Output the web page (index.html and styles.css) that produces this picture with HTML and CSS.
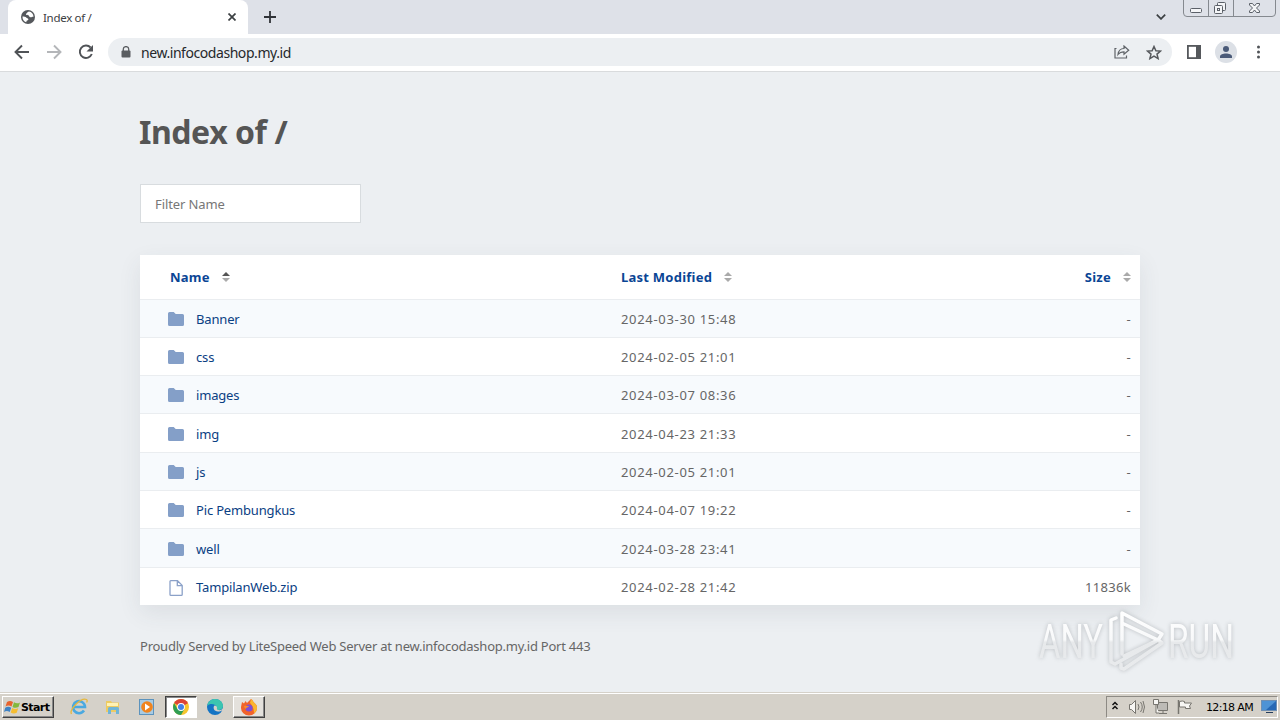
FILE: index.html
```html
<!DOCTYPE html>
<html lang="en">
<head>
  <meta charset="UTF-8">
  <title>Index of /</title>
  <link rel="stylesheet" href="styles.css">
</head>
<body>
  <svg class="defs">
    <symbol id="folder" viewBox="0 0 16 14">
      <path d="M1.5 0h4.2l2 2h6.8Q16 2 16 3.5v9q0 1.5-1.500 1.500h-13Q0 14 0 12.500v-11Q0 0 1.500 0z" fill="#849fc8"/>
    </symbol>
    <symbol id="sort" viewBox="0 0 8 10">
      <path d="M0 4l4-4 4 4z"/>
      <path d="M0 6h8l-4 4z" fill="#aaa"/>
    </symbol>
  </svg>

  <div class="tabstrip">
    <div class="tab">
      <svg class="globe" width="14" height="14" viewBox="0 0 14 14">
        <circle cx="7" cy="7" r="7" fill="#55585c"/>
        <path d="M8 1.500c-2 .3-1.500 1.700-3 2.300-.5 1.500 1.500 1.200 2.500 1.500 1 .8.500 2 2 2 1.200.2 1.600-.6 3-.5C12.500 4 10.500 1.800 8 1.500zM1.500 6.500c1.500 0 3 .2 4 1.200 1 .8 2.200.6 1.800 2-.7.700-1.700.5-1.800 1.600l-.3.900C3 11.500 1.300 9.500 1.500 6.500z" fill="#fff"/>
      </svg>
      <span class="tab-title">Index of /</span>
      <svg class="tab-close" width="8" height="8" viewBox="0 0 8 8"><path d="M.5.5l7 7m0-7l-7 7" stroke="#3c4043" stroke-width="1.700"/></svg>
    </div>
    <svg class="new-tab" width="12" height="12" viewBox="0 0 12 12"><path d="M6 0v12M0 6h12" stroke="#303338" stroke-width="1.800"/></svg>
    <svg class="tab-search" width="10" height="6" viewBox="0 0 10 6"><path d="M.8.700L5 4.900 9.200.700" fill="none" stroke="#3c4043" stroke-width="1.700"/></svg>
    <svg class="window-buttons" width="94" height="18" viewBox="0 0 94 18">
      <path d="M.5 0v13q0 3.500 3.500 3.500h85q3.500 0 3.500-3.500V0M25.500 0v16M50.500 0v16" fill="none" stroke="#85898f"/>
      <g fill="#f4f5f7" stroke="#5b6068">
        <rect x="7.500" y="8.500" width="11" height="4" rx="1"/>
        <rect x="34.500" y="2.500" width="8" height="8" rx="1"/>
        <rect x="31.500" y="5.500" width="8" height="8" rx="1"/>
        <rect x="34.500" y="8.500" width="2" height="2"/>
        <path d="M66.500 3.500h3l2 2.500 2-2.500h3v1.500L73.500 8l3 3v1.500h-3l-2-2.500-2 2.500h-3V11l3-3-3-3z"/>
      </g>
    </svg>
  </div>

  <div class="toolbar">
    <svg class="nav-icons" width="108" height="36" viewBox="0 0 108 36">
      <g fill="none" stroke-width="1.900">
        <path d="M29 18H16M22 11.500L15.500 18l6.500 6.500" stroke="#505357"/>
        <path d="M47 18h13M54 11.500l6.500 6.500-6.500 6.500" stroke="#b4b6b9"/>
        <path d="M90.600 13.500A6.200 6.200 0 1 0 91.800 20" stroke="#505357"/>
      </g>
      <path d="M93 11v6.500h-6.500z" fill="#505357"/>
    </svg>
    <div class="omnibox">
      <svg width="10" height="12" viewBox="0 0 10 12">
        <rect x=".5" y="4.500" width="9" height="7" rx="1" fill="#5a5d61"/>
        <path d="M2.300 5V3a2.700 2.400 0 0 1 5.400 0v2" fill="none" stroke="#5a5d61" stroke-width="1.300"/>
      </svg>
      <span class="url">new.infocodashop.my.id</span>
      <svg class="share" width="16" height="14" viewBox="0 0 16 14">
        <path d="M2.500 3.500H1v9.500h11.500v-2.500" fill="none" stroke="#5f6368" stroke-width="1.200"/>
        <path d="M4 9.500c.5-4 2.500-6 6-6V1l4.700 4.200L10 9.200V6.800c-3 0-4.500.8-6 2.700z" fill="none" stroke="#5f6368" stroke-width="1.200"/>
      </svg>
      <svg class="star" width="16" height="15" viewBox="0 0 16 15"><path d="M8 1.500l1.900 4.200 4.600.4-3.500 3 1.100 4.500L8 11.200l-4.100 2.400L5 9.100l-3.500-3 4.600-.4z" fill="none" stroke="#55585c" stroke-width="1.500"/></svg>
    </div>
    <svg width="108" height="36" viewBox="0 0 108 36">
      <rect x="15.900" y="11.900" width="12.200" height="12.200" fill="none" stroke="#55585c" stroke-width="1.800"/>
      <rect x="24" y="11" width="5" height="14" fill="#55585c"/>
      <circle cx="54" cy="18" r="11" fill="#dce0e6"/>
      <circle cx="54" cy="15" r="3" fill="#4a5a78"/>
      <path d="M48 24v-1.500c0-4 12-4 12 0V24z" fill="#4a5a78"/>
      <g fill="#505357"><circle cx="86.500" cy="13" r="1.500"/><circle cx="86.500" cy="18" r="1.500"/><circle cx="86.500" cy="23" r="1.500"/></g>
    </svg>
  </div>

  <main class="page">
    <h1>Index of /</h1>
    <input class="filter" type="text" placeholder="Filter Name">
    <table>
      <thead>
        <tr>
          <th class="name">Name<svg class="sort active"><use href="#sort"/></svg></th>
          <th class="date">Last Modified<svg class="sort"><use href="#sort"/></svg></th>
          <th class="size">Size<svg class="sort"><use href="#sort"/></svg></th>
        </tr>
      </thead>
      <tbody>
        <tr><td class="name"><svg class="icon"><use href="#folder"/></svg><a>Banner</a></td><td class="date">2024-03-30 15:48</td><td class="size">-</td></tr>
        <tr><td class="name"><svg class="icon"><use href="#folder"/></svg><a>css</a></td><td class="date">2024-02-05 21:01</td><td class="size">-</td></tr>
        <tr><td class="name"><svg class="icon"><use href="#folder"/></svg><a>images</a></td><td class="date">2024-03-07 08:36</td><td class="size">-</td></tr>
        <tr class="tall"><td class="name"><svg class="icon"><use href="#folder"/></svg><a>img</a></td><td class="date">2024-04-23 21:33</td><td class="size">-</td></tr>
        <tr><td class="name"><svg class="icon"><use href="#folder"/></svg><a>js</a></td><td class="date">2024-02-05 21:01</td><td class="size">-</td></tr>
        <tr><td class="name"><svg class="icon"><use href="#folder"/></svg><a>Pic Pembungkus</a></td><td class="date">2024-04-07 19:22</td><td class="size">-</td></tr>
        <tr class="tall"><td class="name"><svg class="icon"><use href="#folder"/></svg><a>well</a></td><td class="date">2024-03-28 23:41</td><td class="size">-</td></tr>
        <tr>
          <td class="name"><svg class="icon file" viewBox="0 0 16 16"><path d="M2 1.500Q2 .7 2.800.700H9.500l4.700 4.700v9q0 .9-.9.900H2.900q-.9 0-.9-.9zM9.300 1v4.600H14" fill="none" stroke="#8ba1c8" stroke-width="1.300"/></svg><a>TampilanWeb.zip</a></td>
          <td class="date">2024-02-28 21:42</td><td class="size">11836k</td>
        </tr>
      </tbody>
    </table>
    <footer>Proudly Served by LiteSpeed Web Server at new.infocodashop.my.id Port 443</footer>
  </main>

  <svg class="watermark" width="240" height="84" viewBox="0 0 240 84">
    <defs>
      <linearGradient id="fade" gradientUnits="userSpaceOnUse" x1="0" y1="6" x2="0" y2="68">
        <stop offset="0" stop-color="#fff"/>
        <stop offset=".48" stop-color="#f8f9fa"/>
        <stop offset=".52" stop-color="#e7e9eb"/>
        <stop offset="1" stop-color="#e9ebed"/>
      </linearGradient>
    </defs>
    <g fill="url(#fade)">
      <text x="9" y="54" textLength="64" lengthAdjust="spacingAndGlyphs">ANY</text>
      <text x="138" y="54" textLength="66" lengthAdjust="spacingAndGlyphs">RUN</text>
    </g>
    <g fill="none" stroke="url(#fade)" stroke-width="3.500" stroke-linejoin="round" stroke-linecap="round">
      <path d="M92 50V9l40 21-4 6-34-16"/>
      <path d="M86 14l-5 2v42l4 2 43-24"/>
      <path d="M91 60v4l3 1 38-26-4-3"/>
      <path d="M94 52l34-16"/>
    </g>
  </svg>

  <div class="taskbar">
    <div class="start">
      <svg width="17" height="16" viewBox="0 0 17 16">
        <path d="M3 3q3-2 6 0L7.500 7.500q-3-2-6 0z" fill="#e8622c"/>
        <path d="M10 3.300q3 2 6 .2L14.500 8q-3 1.700-6-.1z" fill="#83b83b"/>
        <path d="M1.200 8.700q3-2 6 0L5.700 13q-3-2-5.700 0z" fill="#3e82c4"/>
        <path d="M8.200 9q3 1.900 6 .2l-1.500 4.500q-3 1.600-6-.2z" fill="#f5bd30"/>
      </svg>
      <span>Start</span>
    </div>
    <div class="task">
      <svg width="18" height="18" viewBox="0 0 18 18">
        <path d="M14 12.500A6 6 0 1 1 15 9H4" fill="none" stroke="#4aa9e0" stroke-width="2.600"/>
        <path d="M1.500 16C-1 12 11-1 16.500 1.500c1 .6.600 2 .1 3" fill="none" stroke="#e6b83c" stroke-width="1.300"/>
      </svg>
    </div>
    <div class="task">
      <svg width="18" height="18" viewBox="0 0 18 18">
        <path d="M2 3h5l1 1.500h7V14H2z" fill="#edcb62"/><path d="M3 5h11v3H3z" fill="#fff2b4"/>
        <path d="M4 16v-5.500q0-1.500 1.500-1.500h8q1.500 0 1.500 1.500V16h-3v-4H7v4z" fill="#70b5d7"/>
      </svg>
    </div>
    <div class="task">
      <svg width="18" height="18" viewBox="0 0 18 18">
        <rect x="1.500" y="1.500" width="14" height="15" fill="#a8cbe3" stroke="#5c93bd"/>
        <circle cx="9" cy="9" r="5.800" fill="#f0841e"/><path d="M7 5.500l5 3.500-5 3.500z" fill="#fff"/>
      </svg>
    </div>
    <div class="task pressed">
      <svg width="18" height="18" viewBox="0 0 18 18">
        <circle cx="9" cy="9" r="8" fill="#f6c52e"/>
        <path d="M9 9L2.100 5A8 8 0 0 1 15.900 5z" fill="#db4437"/>
        <path d="M2.100 5A8 8 0 0 0 9 17l3.500-6H5.500z" fill="#2f9e54"/>
        <path d="M9 5h6.900L9 9z" fill="#db4437"/>
        <circle cx="9" cy="9" r="3.900" fill="#fff"/><circle cx="9" cy="9" r="3" fill="#4080e8"/>
      </svg>
    </div>
    <div class="task">
      <svg width="18" height="18" viewBox="0 0 18 18">
        <circle cx="9" cy="9" r="8" fill="#1474c4"/>
        <path d="M1.200 8C2 3 5.500 1 9 1c5 0 8 3.500 8 7 0 3-2.500 4.500-5.500 4-1.500-.5-1-1.500-1-2.500C10.500 6 4 4.500 1.200 8z" fill="#3cc5b0"/>
        <path d="M8.500 7.500c-2 2-.5 6 3.500 6 2 0 3-.5 4-1l1.500 1.500V9.500c-1 2-3 3-5.500 2.500-1.500-.5-1-1.500-1-2.500 0-1-.8-2-2.500-2z" fill="#d5d1c9"/>
      </svg>
    </div>
    <div class="task raised">
      <svg width="18" height="18" viewBox="0 0 18 18">
        <path d="M1 9l1-5 2 1.500L5.500 3 7 5l4-4c1.500 1 2 2.500 3.500 4C16.500 6.500 17 8 17 10A8 7.500 0 0 1 1 10z" fill="#f1632b"/>
        <path d="M11 1c1.500 1 2 2.500 3.500 4C16.500 6.500 17 8 17 10c0 2-1 4-3 5.500C14 10 12 7 10 5z" fill="#fbb62f"/>
        <circle cx="9" cy="10" r="3.600" fill="#7b50d8"/>
        <path d="M4 8c2-.8 3 0 5 0-1 2-3 1-3 3-1-.5-2-1.500-2-3z" fill="#f98c2b"/>
      </svg>
    </div>
    <div class="tray">
      <svg width="90" height="20" viewBox="0 0 90 20">
        <path d="M5.500 8L8 5.500 10.500 8M5.500 12L8 9.500l2.500 2.500" fill="none" stroke="#111" stroke-width="1.500"/>
        <g fill="#f7f6f3" stroke="#77756f">
          <path d="M22.500 7.500h2l4-4v13l-4-4h-2z"/>
          <path d="M31 7q2 3 0 6M33.500 5q3.500 5 0 10M36 4q3 6 0 12" fill="none"/>
          <path d="M50.500 5.500h10v8h-10z" fill="#bdbbb6"/><path d="M52 16.500h8M56 14v2"/>
          <path d="M46.500 2.500v5h5v-5zM49 8v8h3"/>
          <path d="M71.500 3v14" stroke-width="1.500"/><path d="M72.500 4.500q3-1 5 0v1.500h7l-2 3 1 2.500h-5V10h-6z"/>
        </g>
      </svg>
      <span class="clock">12:18 AM</span>
      <svg width="16" height="14" viewBox="0 0 16 14">
        <rect x=".5" y=".5" width="15" height="10" fill="#2668b5" stroke="#6f8fb2"/>
        <path d="M1 1h14L5 10H1z" fill="#4e93d5"/><path d="M5 12.500h7" stroke="#253d5c"/>
      </svg>
    </div>
  </div>
</body>
</html>
```
FILE: styles.css
```css
* {
  box-sizing: border-box;
}
body {
  margin: 0;
  width: 1280px;
  height: 720px;
  overflow: hidden;
  display: flex;
  flex-direction: column;
  font-family: "Noto Sans", "Open Sans", sans-serif;
  background: #eceff2;
}
svg {
  flex: none;
}
.defs {
  position: absolute;
  width: 0;
  height: 0;
}

/* browser chrome */
.tabstrip {
  height: 34px;
  display: flex;
  align-items: center;
  padding-left: 8px;
  background: #dee1e8;
}
.tab {
  width: 240px;
  height: 34px;
  display: flex;
  align-items: center;
  padding: 0 12px 0 13px;
  background: #fff;
  border-radius: 8px 8px 0 0;
}
.tab-title {
  flex: 1;
  margin-left: 8px;
  font-size: 11.5px;
  letter-spacing: -0.3px;
  color: #3c4043;
}
.new-tab {
  margin-left: 16px;
}
.tab-search {
  margin-left: auto;
}
.window-buttons {
  align-self: flex-start;
  margin: 0 3px 0 17px;
}
.toolbar {
  height: 38px;
  display: flex;
  align-items: center;
  padding-bottom: 1px;
  background: #fff;
  border-bottom: 1px solid #d9dbdd;
}
.omnibox {
  width: 1064px;
  height: 28px;
  display: flex;
  align-items: center;
  padding: 0 10px 0 13px;
  border-radius: 14px;
  background: #eceff2;
}
.url {
  flex: 1;
  margin-left: 10px;
  font-size: 14px;
  letter-spacing: -0.44px;
  color: #26282b;
}
.share {
  margin-right: 16px;
}

/* directory listing */
.page {
  flex: 1;
  padding: 0 140px;
  color: #666;
  font-size: 13px;
}
h1 {
  margin: 37px 0 29px -1px;
  font-size: 32px;
  line-height: 46px;
  letter-spacing: -0.45px;
  color: #555;
}
.filter {
  display: block;
  width: 221px;
  height: 39px;
  padding: 0 14px;
  border: 1px solid #d8dcdf;
  background: #fff;
  font: 13px "Noto Sans", sans-serif;
  letter-spacing: -0.1px;
}
.filter::placeholder {
  color: #777;
}
table {
  width: 1000px;
  margin-top: 32px;
  border-collapse: separate;
  border-spacing: 0;
  table-layout: fixed;
  background: #fff;
  box-shadow: 0 8px 22px rgba(60, 70, 80, 0.09);
}
th {
  height: 44px;
  padding: 0;
  text-align: left;
  letter-spacing: 0.25px;
  color: #0a4595;
}
td {
  height: 38px;
  padding: 0;
  border-top: 1px solid #eaedf0;
}
.tall td {
  height: 39px;
  padding-top: 1px;
}
tbody tr:nth-child(odd) {
  background: #f7fafd;
}
.name {
  width: 481px;
  padding-left: 30px;
}
td.name {
  padding-left: 28px;
}
td.date {
  letter-spacing: 0.68px;
}
td.size {
  letter-spacing: 0.3px;
}
.size {
  text-align: right;
  padding-right: 9px;
}
.sort {
  width: 8px;
  height: 10px;
  margin-left: 12px;
  fill: #aaa;
}
.sort.active {
  fill: #555;
}
.icon {
  width: 16px;
  height: 14px;
  margin-right: 12px;
  vertical-align: -2px;
}
.icon.file {
  height: 16px;
  vertical-align: -4px;
}
a {
  letter-spacing: -0.17px;
  color: #0a4083;
}
footer {
  margin-top: 31px;
  line-height: 20px;
  letter-spacing: -0.24px;
}

.watermark {
  position: absolute;
  left: 1030px;
  top: 604px;
  font: 48px "Roboto", sans-serif;
  filter: drop-shadow(0 0 2px rgba(110, 115, 120, 0.4));
}

/* windows taskbar */
.taskbar {
  height: 28px;
  display: flex;
  align-items: center;
  padding: 1px 2px 0;
  background: #d5d1c9;
  border-top: 1px solid #d5d1c9;
  box-shadow: inset 0 1px #fff;
}
.start {
  width: 52px;
  height: 22px;
  margin-right: 9px;
  display: flex;
  align-items: center;
  padding-left: 1px;
  font: bold 11px "DejaVu Sans", sans-serif;
  letter-spacing: -0.6px;
  color: #000;
}
.start,
.raised {
  border: 1px solid;
  border-color: #fff #404040 #404040 #fff;
  box-shadow: inset -1px -1px #888;
}
.task {
  width: 32px;
  height: 22px;
  margin-right: 2px;
  display: flex;
  align-items: center;
  justify-content: center;
}
.pressed {
  background: #fff;
  border: 1px solid;
  border-color: #404040 #fff #fff #404040;
  box-shadow: inset 1px 1px #888;
}
.raised {
  background: #e4e1dc;
}
.tray {
  width: 172px;
  height: 22px;
  margin-left: auto;
  display: flex;
  align-items: center;
  border: 1px solid;
  border-color: #8d8a84 #fff #fff #8d8a84;
}
.clock {
  flex: 1;
  margin-left: 9px;
  font: 11px "DejaVu Sans", sans-serif;
  letter-spacing: -0.65px;
  white-space: nowrap;
  color: #000;
}
```
